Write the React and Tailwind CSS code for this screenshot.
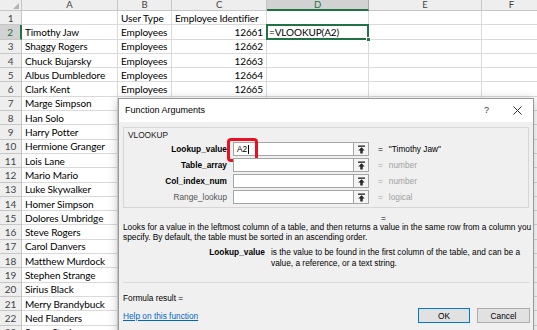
import React from 'react';

const COLS = [
  { key: 'A', w: 'w-[96px]' },
  { key: 'B', w: 'w-[54px]' },
  { key: 'C', w: 'w-[95px]' },
  { key: 'D', w: 'w-[102px]' },
  { key: 'E', w: 'w-[113px]' },
  { key: 'F', w: 'w-[60px]' },
];

const NAMES = [
  '', 'Timothy Jaw', 'Shaggy Rogers', 'Chuck Bujarsky', 'Albus Dumbledore', 'Clark Kent',
  'Marge Simpson', 'Han Solo', 'Harry Potter', 'Hermione  Granger', 'Lois Lane',
  'Mario Mario', 'Luke Skywalker', 'Homer Simpson', 'Dolores Umbridge', 'Steve Rogers',
  'Carol Danvers', 'Matthew Murdock', 'Stephen Strange', 'Sirius Black', 'Merry Brandybuck',
  'Ned Flanders', 'Sansa Stark',
];

const sheetFont = { fontFamily: 'Lato, "Open Sans", sans-serif' };

const Cell = ({ w, children, className = '' }) => (
  <div className={`${w} shrink-0 h-full border-r border-b border-[#dadada] px-[3px] flex items-center whitespace-nowrap overflow-visible ${className}`}>
    {children}
  </div>
);

const Sheet = () => (
  <div className="text-[10px] tracking-[-0.1px] text-black leading-none" style={sheetFont}>
    <div className="flex h-[11px]">
      <div className="w-[22px] shrink-0 h-full bg-[#eeeeee] border-r border-b border-[#c6c6c6] relative">
        <div className="absolute right-[2px] bottom-[1px] w-0 h-0 border-l-[6px] border-l-transparent border-b-[6px] border-b-[#b4b4b4]" />
      </div>
      {COLS.map((c) => (
        <div
          key={c.key}
          className={`${c.w} shrink-0 h-full flex items-center justify-center text-[9.5px] border-r ${
            c.key === 'D'
              ? 'bg-[#d2d2d2] text-[#217346] border-b-2 border-b-[#217346] border-r-[#ababab]'
              : 'bg-[#eeeeee] text-[#444] border-b border-b-[#c6c6c6] border-r-[#c6c6c6]'
          }`}
        >
          {c.key}
        </div>
      ))}
    </div>
    {NAMES.map((name, i) => {
      const r = i + 1;
      const emp = r >= 2 && r <= 6;
      return (
        <div key={r} className="flex h-[14.3px]">
          <div
            className={`w-[22px] shrink-0 h-full flex items-center justify-center text-[10px] border-b border-b-[#c6c6c6] ${
              r === 2
                ? 'bg-[#d2d2d2] text-[#217346] border-r-2 border-r-[#217346]'
                : 'bg-[#eeeeee] text-[#444] border-r border-r-[#c6c6c6]'
            }`}
          >
            {r}
          </div>
          <Cell w="w-[96px]">{name}</Cell>
          <Cell w="w-[54px]">{r === 1 ? 'User Type' : emp ? 'Employees' : ''}</Cell>
          <Cell w="w-[95px]" className={r === 1 ? '' : 'justify-end'}>
            {r === 1 ? 'Employee Identifier' : emp ? 12659 + r : ''}
          </Cell>
          {r === 2 ? (
            <div className="w-[102px] shrink-0 h-full relative border-b border-[#dadada]">
              <div className="absolute -left-[1px] -top-[1px] right-0 bottom-[-1px] border-2 border-[#217346] flex items-center px-[1px]">
                =VLOOKUP(A2)
              </div>
              <div className="absolute right-[-2px] bottom-[-3px] w-[5px] h-[5px] bg-[#217346] border border-white" />
            </div>
          ) : (
            <Cell w="w-[102px]" />
          )}
          <Cell w="w-[113px]" />
          <Cell w="w-[60px]" />
        </div>
      );
    })}
  </div>
);

const UpIcon = () => (
  <svg width="9" height="9" viewBox="0 0 9 9">
    <rect x="1" y="0.5" width="7" height="1.3" fill="#222" />
    <path d="M4.5 2.3 L1.3 5.6 H3.3 V8.5 H5.7 V5.6 H7.7 Z" fill="#222" />
  </svg>
);

const ARGS = [
  { label: 'Lookup_value', bold: true, val: '"Timothy Jaw"', dark: true, input: 'A2' },
  { label: 'Table_array', bold: true, val: 'number' },
  { label: 'Col_index_num', bold: true, val: 'number' },
  { label: 'Range_lookup', bold: false, val: 'logical' },
];

const dlgFont = { fontFamily: '"Liberation Sans", Arial, sans-serif' };

const Dialog = () => (
  <div
    className="absolute left-[118px] top-[98px] w-[416px] h-[250px] bg-[#f0f0f0] border border-[#9a9a9a] shadow-[0_2px_10px_rgba(0,0,0,0.25)] text-[8.3px] text-black leading-none"
    style={dlgFont}
  >
    <div className="h-[23px] bg-white flex items-center pl-[6px] pr-[10px] text-[9px]">
      <span>Function Arguments</span>
      <span className="ml-auto mr-[24px] text-[9px] text-[#333]">?</span>
      <svg width="9" height="9" viewBox="0 0 9 9" className="mr-[1px]">
        <path d="M0.5 0.5 L8.5 8.5 M8.5 0.5 L0.5 8.5" stroke="#333" strokeWidth="1" />
      </svg>
    </div>
    <div className="px-[4px] pt-[5px]">
      <div className="h-[81px] border border-[#d6d6d6] pt-[3px] px-[3px]">
        <div className="h-[7px] text-[8.3px] text-[#222] pl-[1px]">VLOOKUP</div>
        <div className="mt-[4px] flex flex-col gap-[2px]">
          {ARGS.map((a) => (
            <div key={a.label} className="flex items-center h-[14px]">
              <div
                className={`w-[106px] text-right pr-[6px] ${a.bold ? 'font-bold text-black' : 'text-[#555]'}`}
              >
                {a.label}
              </div>
              <div className="relative w-[121px] h-[14px] bg-white border border-[#a5a5a5] flex items-center pl-[3px]">
                {a.input && (
                  <>
                    <span>{a.input}</span>
                    <span className="w-px h-[9px] bg-black ml-[1px]" />
                    <div className="absolute -left-[7px] -top-[5px] w-[31px] h-[24px] border-[3px] border-[#e81123] rounded-[4px]" />
                  </>
                )}
              </div>
              <div className="w-[15px] h-[14px] bg-[#f4f4f4] border border-l-0 border-[#a5a5a5] flex items-center justify-center">
                <UpIcon />
              </div>
              <div className={`ml-[9px] ${a.dark ? 'text-black' : 'text-[#a0a0a0]'}`}>=</div>
              <div className={`ml-[6px] ${a.dark ? 'text-black' : 'text-[#a0a0a0]'}`}>{a.val}</div>
            </div>
          ))}
        </div>
      </div>
      <div className="mt-[6px] pl-[258px] h-[6px]">=</div>
      <div className="mt-[3px] leading-[9.5px] whitespace-nowrap">
        <div>Looks for a value in the leftmost column of a table, and then returns a value in the same row from a column you</div>
        <div>specify. By default, the table must be sorted in an ascending order.</div>
      </div>
      <div className="mt-[5px] flex leading-[11px]">
        <div className="w-[148px] text-right pr-[6px] font-bold">Lookup_value</div>
        <div className="w-[258px]">is the value to be found in the first column of the table, and can be a value, a reference, or a text string.</div>
      </div>
      <div className="mt-[13px] border-t border-[#dcdcdc]" />
      <div className="mt-[11px]">Formula result =</div>
      <div className="mt-[6px] flex items-center">
        <a className="text-[#0066cc] underline">Help on this function</a>
        <div className="ml-auto flex gap-[7px] mr-[-1px]">
          <button className="w-[52px] h-[15px] bg-[#e1e1e1] border border-[#0078d7] text-[8.3px]">OK</button>
          <button className="w-[53px] h-[15px] bg-[#e1e1e1] border border-[#adadad] text-[8.3px]">Cancel</button>
        </div>
      </div>
    </div>
  </div>
);

export default function App() {
  return (
    <div className="relative w-[537px] h-[330px] overflow-hidden bg-white">
      <Sheet />
      <Dialog />
    </div>
  );
}
